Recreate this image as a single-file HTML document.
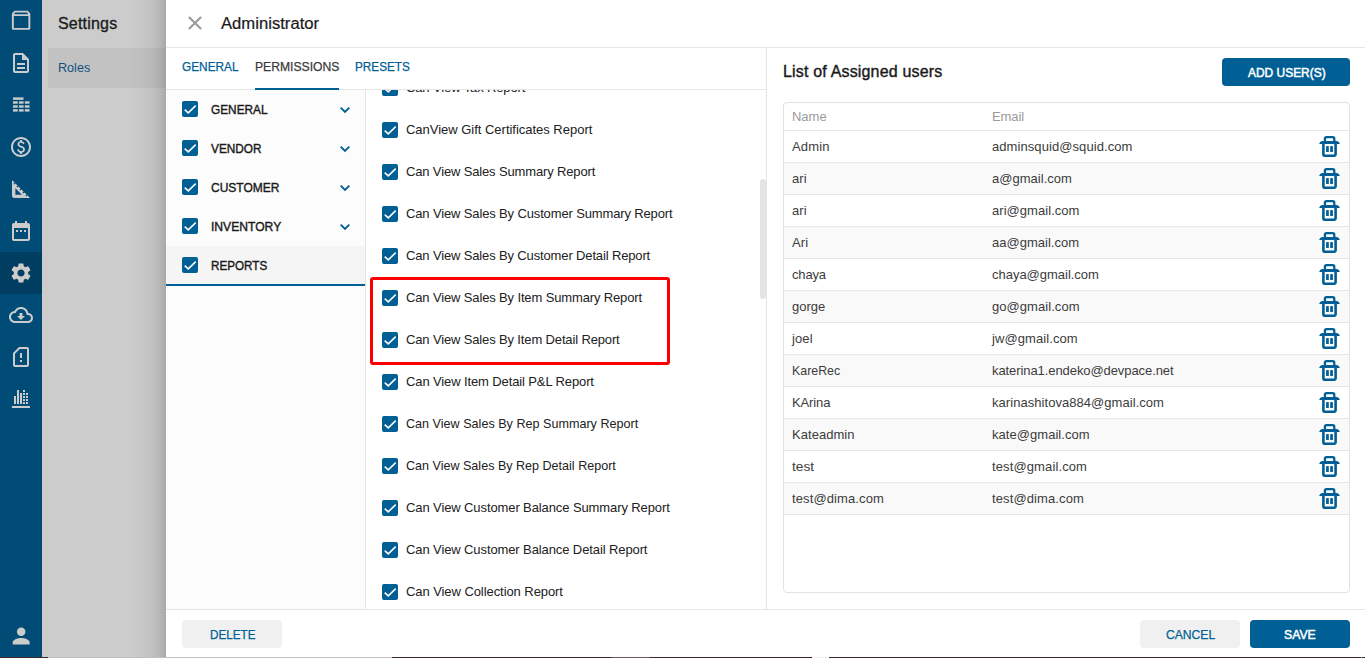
<!DOCTYPE html><html><head><meta charset="utf-8"><title>Administrator</title><style>

*{box-sizing:border-box;margin:0;padding:0}
html,body{width:1365px;height:658px;overflow:hidden;background:#fff}
body{font-family:"Liberation Sans", sans-serif;position:relative;color:#212121}
.tx{white-space:nowrap;position:absolute;display:block;line-height:1}
.abs{position:absolute}
#side{left:0;top:0;width:42px;height:658px;background:#004c77}
#side .act{position:absolute;left:0;top:252px;width:42px;height:42px;background:#003d60}
#side svg{position:absolute}
#ov{left:42px;top:0;width:124px;height:658px;background:#cccccc}
#shadow{left:128px;top:0;width:38px;height:658px;background:linear-gradient(to right,rgba(0,0,0,0) 0%,rgba(0,0,0,0.015) 31.6%,rgba(0,0,0,0.044) 57.9%,rgba(0,0,0,0.088) 76.3%,rgba(0,0,0,0.127) 89.5%,rgba(0,0,0,0.175) 100%)}
#roles{left:48px;top:48px;width:118px;height:40px;background:#c2c2c2;border-radius:3px 0 0 3px}
#panel{left:166px;top:0;width:1199px;height:658px;background:#fff}
.hline{position:absolute;height:1px;background:#e6e6e6}
.vline{position:absolute;width:1px;background:#e4e4e4}
.cb{position:absolute;width:16px;height:16px}
.chev{position:absolute;width:12px;height:8px}
.trash{position:absolute;width:21px;height:23px}
.btn{position:absolute;border-radius:4px;height:28px}

</style></head><body>
<div id="side" class="abs"><div class="act"></div>
<svg style="left:0;top:0" width="42" height="658" viewBox="0 0 42 658" fill="#cccccc">
<path fill-rule="evenodd" d="M14.4 10.7 H27.8 L30.3 13.4 V28.2 a1.6 1.6 0 0 1 -1.6 1.6 H13.5 a1.6 1.6 0 0 1 -1.6 -1.6 V13.4 Z M15.2 12.4 L14 14.3 H28.2 L27 12.4 Z M13.8 16.1 V28 H28.4 V16.1 Z"/>
<path transform="translate(21 63) scale(1) translate(-12 -12)" d="M8 16h8v2H8zm0-4h8v2H8zm6-10H6c-1.1 0-2 .9-2 2v16c0 1.1.89 2 1.99 2H18c1.1 0 2-.9 2-2V8l-6-6zm4 18H6V4h7v5h5v11z"/>
<path d="M22 55 V60 H27 Z" opacity="0.85"/>
<rect x="13" y="97.4" width="10.5" height="2.4"/>
<rect x="13" y="101.3" width="4.7" height="2.4"/>
<rect x="18.9" y="101.3" width="4.7" height="2.4"/>
<rect x="24.8" y="101.3" width="4.7" height="2.4"/>
<rect x="13" y="105.3" width="4.7" height="2.4"/>
<rect x="18.9" y="105.3" width="4.7" height="2.4"/>
<rect x="24.8" y="105.3" width="4.7" height="2.4"/>
<rect x="13" y="109.2" width="4.7" height="2.4"/>
<rect x="18.9" y="109.2" width="4.7" height="2.4"/>
<rect x="24.8" y="109.2" width="4.7" height="2.4"/>
<path transform="translate(21 147) scale(1) translate(-12 -12)" d="M12 2C6.48 2 2 6.48 2 12s4.48 10 10 10 10-4.48 10-10S17.52 2 12 2zm0 18c-4.41 0-8-3.59-8-8s3.59-8 8-8 8 3.59 8 8-3.59 8-8 8zm.89-8.9c-1.78-.59-2.64-.96-2.64-1.9 0-1.02 1.11-1.39 1.81-1.39 1.31 0 1.79.99 1.9 1.34l1.58-.67c-.15-.45-.82-1.92-2.54-2.24V5h-2v1.26c-2.48.56-2.49 2.86-2.49 2.96 0 2.27 2.25 2.91 3.35 3.31 1.58.56 2.28 1.07 2.28 2.03 0 1.13-1.05 1.61-1.98 1.61-1.82 0-2.34-1.87-2.4-2.09l-1.66.67c.63 2.19 2.28 2.78 2.9 2.96V19h2v-1.24c.4-.09 2.9-.59 2.9-3.22 0-1.39-.61-2.610-3.010-3.440z"/>
<path transform="translate(21 189) scale(1.125) translate(-12 -12)" d="M17.66 17.66l-1.06 1.06-.71-.71 1.06-1.06-1.94-1.94-1.06 1.06-.71-.71 1.06-1.06-1.94-1.94-1.06 1.06-.71-.71 1.06-1.06L9.7 9.7l-1.06 1.06-.71-.71 1.06-1.06-1.94-1.94-1.06 1.06-.71-.71 1.06-1.06L4 4v14c0 1.1.9 2 2 2h14l-2.340-2.340zM7 17v-5.760L12.760 17H7z"/>
<path transform="translate(21 231) scale(1) translate(-12 -12)" d="M9 11H7v2h2v-2zm4 0h-2v2h2v-2zm4 0h-2v2h2v-2zm2-7h-1V2h-2v2H8V2H6v2H5c-1.11 0-1.99.9-1.99 2L3 20c0 1.1.89 2 2 2h14c1.1 0 2-.9 2-2V6c0-1.1-.9-2-2-2zm0 16H5V9h14v11z"/>
<path transform="translate(21 273) scale(1) translate(-12 -12)" d="M19.14 12.94c.04-.3.06-.61.06-.94 0-.32-.02-.64-.07-.94l2.03-1.58c.18-.14.23-.41.12-.61l-1.92-3.32c-.12-.22-.37-.29-.59-.22l-2.39.96c-.5-.38-1.030-.7-1.620-.94l-.36-2.540c-.040-.240-.240-.410-.480-.410h-3.840c-.240 0-.430.170-.470.410l-.360 2.540c-.590.240-1.130.570-1.620.940l-2.390-.960c-.220-.080-.470 0-.590.220L2.740 8.870c-.120.210-.080.470.120.610l2.030 1.580c-.050.300-.090.630-.090.940s.020.640.070.940l-2.030 1.580c-.180.140-.230.410-.120.610l1.920 3.320c.120.220.370.290.590.220l2.390-.960c.500.380 1.030.700 1.620.940l.360 2.540c.050.240.240.410.480.410h3.840c.240 0 .440-.170.470-.410l.360-2.540c.590-.240 1.130-.560 1.620-.940l2.390.960c.220.080.470 0 .590-.220l1.920-3.320c.120-.220.070-.470-.120-.610l-2.010-1.580zM12 15.600c-1.980 0-3.600-1.620-3.600-3.600s1.620-3.600 3.600-3.600 3.600 1.620 3.600 3.600-1.620 3.600-3.600 3.600z"/>
<path transform="translate(21 315) scale(1) translate(-12 -12)" d="M19.35 10.04C18.67 6.59 15.64 4 12 4 9.11 4 6.6 5.64 5.35 8.04 2.34 8.36 0 10.91 0 14c0 3.31 2.69 6 6 6h13c2.76 0 5-2.24 5-5 0-2.64-2.05-4.78-4.65-4.960zM19 18H6c-2.210 0-4-1.790-4-4 0-2.050 1.530-3.760 3.560-3.970l1.070-.110.500-.950C8.080 7.140 9.940 6 12 6c2.620 0 4.880 1.860 5.390 4.430l.300 1.500 1.530.110c1.560.100 2.780 1.410 2.780 2.960 0 1.650-1.350 3-3 3zm-5.550-8h-2.900v3H8l4 4 4-4h-2.550z"/>
<path transform="translate(21 357) scale(1) translate(-12 -12)" d="M18 2h-8L4 8v12c0 1.100.9 2 2 2h12c1.100 0 2-.9 2-2V4c0-1.100-.9-2-2-2zm0 18H6V8.830L10.830 4H18v16zm-7-5h2v2h-2zm0-7h2v5h-2z"/>
<rect x="11.900" y="406" width="18.100" height="2"/>
<rect x="14" y="396" width="2" height="8"/><rect x="17" y="390" width="2" height="14"/><rect x="20" y="393" width="2" height="11"/>
<rect x="23" y="390" width="2" height="2"/>
<rect x="23" y="393" width="2" height="2"/>
<rect x="23" y="396" width="2" height="2"/>
<rect x="23" y="399" width="2" height="2"/>
<rect x="23" y="402" width="2" height="2"/>
<rect x="26" y="393" width="2" height="2"/>
<rect x="26" y="396" width="2" height="2"/>
<rect x="26" y="399" width="2" height="2"/>
<rect x="26" y="402" width="2" height="2"/>
<path transform="translate(21.2 636) scale(1.06) translate(-12 -12)" d="M12 12c2.210 0 4-1.790 4-4s-1.790-4-4-4-4 1.790-4 4 1.790 4 4 4zm0 2c-2.670 0-8 1.340-8 4v2h16v-2c0-2.660-5.330-4-8-4z"/>
</svg></div>
<div id="ov" class="abs"></div><div id="roles" class="abs"></div><div id="shadow" class="abs"></div>
<span id="t1" class="tx" style="left:58px;top:16.46px;font-size:16px;color:#1a1a1a;-webkit-text-stroke:0.3px #1a1a1a;letter-spacing:0.199px">Settings</span>
<span id="t2" class="tx" style="left:58px;top:61.00px;font-size:13px;color:#15507f;transform-origin:0 0;transform:scaleX(0.9685)">Roles</span>
<div id="panel" class="abs"></div>
<svg class="abs" style="left:187px;top:15px" width="16" height="16" viewBox="0 0 16 16"><path d="M1.900 1.900 L14.100 14.100 M14.100 1.900 L1.900 14.100" stroke="#999999" stroke-width="2.100"/></svg>
<span id="t3" class="tx" style="left:220.5px;top:16.46px;font-size:16px;color:#1a1a1a;-webkit-text-stroke:0.2px #1a1a1a;transform-origin:0 0;transform:scaleX(1.0405)">Administrator</span>
<div class="hline" style="left:166px;top:47px;width:1199px"></div>
<span id="t4" class="tx" style="left:182px;top:60.20px;font-size:13px;color:#005f95;-webkit-text-stroke:0.25px #005f95;transform-origin:0 0;transform:scaleX(0.9107)">GENERAL</span>
<span id="t5" class="tx" style="left:255px;top:60.20px;font-size:13px;color:#3a3a3a;-webkit-text-stroke:0.25px #3a3a3a;transform-origin:0 0;transform:scaleX(0.9342)">PERMISSIONS</span>
<span id="t6" class="tx" style="left:355px;top:60.20px;font-size:13px;color:#005f95;-webkit-text-stroke:0.25px #005f95;transform-origin:0 0;transform:scaleX(0.9040)">PRESETS</span>
<div class="hline" style="left:166px;top:89px;width:600px"></div>
<div class="abs" style="left:255px;top:88px;width:84px;height:2px;background:#005f95"></div>
<div class="abs" style="left:166px;top:90px;width:199px;height:519px;background:#fcfcfc"></div>
<div class="abs" style="left:166px;top:246px;width:199px;height:38px;background:#f5f5f5"></div>
<div class="abs" style="left:166px;top:284px;width:199px;height:2px;background:#005f95"></div>
<div class="vline" style="left:365px;top:90px;height:519px"></div>
<svg class="cb" style="left:182px;top:101px" viewBox="0 0 16 16"><rect x="0" y="0" width="16" height="16" rx="2" fill="#005f95"/><path d="M2.700 8.600 L6.250 11.850 L13.700 4.600" fill="none" stroke="#fff" stroke-width="1.550"/></svg>
<span id="t7" class="tx" style="left:211px;top:102.80px;font-size:13px;color:#1a1a1a;-webkit-text-stroke:0.4px #1a1a1a;transform-origin:0 0;transform:scaleX(0.9107)">GENERAL</span>
<svg class="chev" style="left:339px;top:106px" viewBox="-1 -1 12 8"><path d="M0.700 0.700 L5 5 L9.300 0.700" fill="none" stroke="#005f95" stroke-width="1.900"/></svg>
<svg class="cb" style="left:182px;top:140px" viewBox="0 0 16 16"><rect x="0" y="0" width="16" height="16" rx="2" fill="#005f95"/><path d="M2.700 8.600 L6.250 11.850 L13.700 4.600" fill="none" stroke="#fff" stroke-width="1.550"/></svg>
<span id="t8" class="tx" style="left:211px;top:141.80px;font-size:13px;color:#1a1a1a;-webkit-text-stroke:0.4px #1a1a1a;transform-origin:0 0;transform:scaleX(0.9096)">VENDOR</span>
<svg class="chev" style="left:339px;top:145px" viewBox="-1 -1 12 8"><path d="M0.700 0.700 L5 5 L9.300 0.700" fill="none" stroke="#005f95" stroke-width="1.900"/></svg>
<svg class="cb" style="left:182px;top:179px" viewBox="0 0 16 16"><rect x="0" y="0" width="16" height="16" rx="2" fill="#005f95"/><path d="M2.700 8.600 L6.250 11.850 L13.700 4.600" fill="none" stroke="#fff" stroke-width="1.550"/></svg>
<span id="t9" class="tx" style="left:211px;top:180.80px;font-size:13px;color:#1a1a1a;-webkit-text-stroke:0.4px #1a1a1a;transform-origin:0 0;transform:scaleX(0.9233)">CUSTOMER</span>
<svg class="chev" style="left:339px;top:184px" viewBox="-1 -1 12 8"><path d="M0.700 0.700 L5 5 L9.300 0.700" fill="none" stroke="#005f95" stroke-width="1.900"/></svg>
<svg class="cb" style="left:182px;top:218px" viewBox="0 0 16 16"><rect x="0" y="0" width="16" height="16" rx="2" fill="#005f95"/><path d="M2.700 8.600 L6.250 11.850 L13.700 4.600" fill="none" stroke="#fff" stroke-width="1.550"/></svg>
<span id="t10" class="tx" style="left:211px;top:219.80px;font-size:13px;color:#1a1a1a;-webkit-text-stroke:0.4px #1a1a1a;transform-origin:0 0;transform:scaleX(0.9314)">INVENTORY</span>
<svg class="chev" style="left:339px;top:223px" viewBox="-1 -1 12 8"><path d="M0.700 0.700 L5 5 L9.300 0.700" fill="none" stroke="#005f95" stroke-width="1.900"/></svg>
<svg class="cb" style="left:182px;top:257px" viewBox="0 0 16 16"><rect x="0" y="0" width="16" height="16" rx="2" fill="#005f95"/><path d="M2.700 8.600 L6.250 11.850 L13.700 4.600" fill="none" stroke="#fff" stroke-width="1.550"/></svg>
<span id="t11" class="tx" style="left:211px;top:258.80px;font-size:13px;color:#1a1a1a;-webkit-text-stroke:0.4px #1a1a1a;transform-origin:0 0;transform:scaleX(0.8979)">REPORTS</span>
<div class="abs" style="left:366px;top:90px;width:400px;height:519px;overflow:hidden">
<svg class="cb" style="left:16px;top:-10px" viewBox="0 0 16 16"><rect x="0" y="0" width="16" height="16" rx="2" fill="#005f95"/><path d="M2.700 8.600 L6.250 11.850 L13.700 4.600" fill="none" stroke="#fff" stroke-width="1.550"/></svg>
<span id="t12" class="tx" style="left:40px;top:-9.00px;font-size:13px;color:#212121;letter-spacing:-0.125px">Can View Tax Report</span>
<svg class="cb" style="left:16px;top:32px" viewBox="0 0 16 16"><rect x="0" y="0" width="16" height="16" rx="2" fill="#005f95"/><path d="M2.700 8.600 L6.250 11.850 L13.700 4.600" fill="none" stroke="#fff" stroke-width="1.550"/></svg>
<span id="t13" class="tx" style="left:40px;top:33.00px;font-size:13px;color:#212121;letter-spacing:-0.019px">CanView Gift Certificates Report</span>
<svg class="cb" style="left:16px;top:74px" viewBox="0 0 16 16"><rect x="0" y="0" width="16" height="16" rx="2" fill="#005f95"/><path d="M2.700 8.600 L6.250 11.850 L13.700 4.600" fill="none" stroke="#fff" stroke-width="1.550"/></svg>
<span id="t14" class="tx" style="left:40px;top:75.00px;font-size:13px;color:#212121;letter-spacing:-0.147px">Can View Sales Summary Report</span>
<svg class="cb" style="left:16px;top:116px" viewBox="0 0 16 16"><rect x="0" y="0" width="16" height="16" rx="2" fill="#005f95"/><path d="M2.700 8.600 L6.250 11.850 L13.700 4.600" fill="none" stroke="#fff" stroke-width="1.550"/></svg>
<span id="t15" class="tx" style="left:40px;top:117.00px;font-size:13px;color:#212121;letter-spacing:-0.139px">Can View Sales By Customer Summary Report</span>
<svg class="cb" style="left:16px;top:158px" viewBox="0 0 16 16"><rect x="0" y="0" width="16" height="16" rx="2" fill="#005f95"/><path d="M2.700 8.600 L6.250 11.850 L13.700 4.600" fill="none" stroke="#fff" stroke-width="1.550"/></svg>
<span id="t16" class="tx" style="left:40px;top:159.00px;font-size:13px;color:#212121;letter-spacing:-0.142px">Can View Sales By Customer Detail Report</span>
<svg class="cb" style="left:16px;top:200px" viewBox="0 0 16 16"><rect x="0" y="0" width="16" height="16" rx="2" fill="#005f95"/><path d="M2.700 8.600 L6.250 11.850 L13.700 4.600" fill="none" stroke="#fff" stroke-width="1.550"/></svg>
<span id="t17" class="tx" style="left:40px;top:201.00px;font-size:13px;color:#212121;letter-spacing:-0.139px">Can View Sales By Item Summary Report</span>
<svg class="cb" style="left:16px;top:242px" viewBox="0 0 16 16"><rect x="0" y="0" width="16" height="16" rx="2" fill="#005f95"/><path d="M2.700 8.600 L6.250 11.850 L13.700 4.600" fill="none" stroke="#fff" stroke-width="1.550"/></svg>
<span id="t18" class="tx" style="left:40px;top:243.00px;font-size:13px;color:#212121;letter-spacing:-0.142px">Can View Sales By Item Detail Report</span>
<svg class="cb" style="left:16px;top:284px" viewBox="0 0 16 16"><rect x="0" y="0" width="16" height="16" rx="2" fill="#005f95"/><path d="M2.700 8.600 L6.250 11.850 L13.700 4.600" fill="none" stroke="#fff" stroke-width="1.550"/></svg>
<span id="t19" class="tx" style="left:40px;top:285.00px;font-size:13px;color:#212121;letter-spacing:-0.117px">Can View Item Detail P&amp;L Report</span>
<svg class="cb" style="left:16px;top:326px" viewBox="0 0 16 16"><rect x="0" y="0" width="16" height="16" rx="2" fill="#005f95"/><path d="M2.700 8.600 L6.250 11.850 L13.700 4.600" fill="none" stroke="#fff" stroke-width="1.550"/></svg>
<span id="t20" class="tx" style="left:40px;top:327.00px;font-size:13px;color:#212121;transform-origin:0 0;transform:scaleX(0.9690)">Can View Sales By Rep Summary Report</span>
<svg class="cb" style="left:16px;top:368px" viewBox="0 0 16 16"><rect x="0" y="0" width="16" height="16" rx="2" fill="#005f95"/><path d="M2.700 8.600 L6.250 11.850 L13.700 4.600" fill="none" stroke="#fff" stroke-width="1.550"/></svg>
<span id="t21" class="tx" style="left:40px;top:369.00px;font-size:13px;color:#212121;transform-origin:0 0;transform:scaleX(0.9658)">Can View Sales By Rep Detail Report</span>
<svg class="cb" style="left:16px;top:410px" viewBox="0 0 16 16"><rect x="0" y="0" width="16" height="16" rx="2" fill="#005f95"/><path d="M2.700 8.600 L6.250 11.850 L13.700 4.600" fill="none" stroke="#fff" stroke-width="1.550"/></svg>
<span id="t22" class="tx" style="left:40px;top:411.00px;font-size:13px;color:#212121;letter-spacing:-0.103px">Can View Customer Balance Summary Report</span>
<svg class="cb" style="left:16px;top:452px" viewBox="0 0 16 16"><rect x="0" y="0" width="16" height="16" rx="2" fill="#005f95"/><path d="M2.700 8.600 L6.250 11.850 L13.700 4.600" fill="none" stroke="#fff" stroke-width="1.550"/></svg>
<span id="t23" class="tx" style="left:40px;top:453.00px;font-size:13px;color:#212121;letter-spacing:-0.104px">Can View Customer Balance Detail Report</span>
<svg class="cb" style="left:16px;top:494px" viewBox="0 0 16 16"><rect x="0" y="0" width="16" height="16" rx="2" fill="#005f95"/><path d="M2.700 8.600 L6.250 11.850 L13.700 4.600" fill="none" stroke="#fff" stroke-width="1.550"/></svg>
<span id="t24" class="tx" style="left:40px;top:495.00px;font-size:13px;color:#212121;letter-spacing:-0.070px">Can View Collection Report</span>
</div>
<div class="abs" style="left:370px;top:277px;width:300px;height:88px;border:3px solid #ff0000;border-radius:3px"></div>
<div class="abs" style="left:760px;top:179px;width:6px;height:120px;background:#e4e4e4;border-radius:3px"></div>
<div class="vline" style="left:766px;top:48px;height:561px"></div>
<span id="t25" class="tx" style="left:783px;top:63.86px;font-size:16px;color:#1a1a1a;-webkit-text-stroke:0.4px #1a1a1a;letter-spacing:0.172px">List of Assigned users</span>
<div class="btn" style="left:1222px;top:58px;width:128px;background:#005f95"></div>
<span id="t26" class="tx" style="left:1248px;top:65.50px;font-size:13px;color:#fff;-webkit-text-stroke:0.5px #fff;transform-origin:0 0;transform:scaleX(0.9188)">ADD USER(S)</span>
<div class="abs" style="left:783px;top:102px;width:567px;height:491px;border:1px solid #e2e2e2;border-radius:4px"></div>
<span id="t27" class="tx" style="left:792px;top:110.00px;font-size:13px;color:#9a9a9a;letter-spacing:-0.016px">Name</span>
<span id="t28" class="tx" style="left:992px;top:110.00px;font-size:13px;color:#9a9a9a;letter-spacing:-0.082px">Email</span>
<div class="hline" style="left:784px;top:130px;width:565px"></div>
<span id="t29" class="tx" style="left:792px;top:140.00px;font-size:13px;color:#3c3c3c;letter-spacing:0.176px">Admin</span>
<span id="t30" class="tx" style="left:992px;top:140.00px;font-size:13px;color:#3c3c3c;letter-spacing:0.076px">adminsquid@squid.com</span>
<svg class="trash" style="left:1319px;top:135px" viewBox="0 0 21 23"><path d="M5.95 6.500 V3.550 a1.500 1.500 0 0 1 1.500 -1.500 H13.750 a1.500 1.500 0 0 1 1.500 1.500 V6.500" fill="none" stroke="#005f95" stroke-width="2.300"/><path d="M0.200 8.900 Q0.900 5.900 3.600 5.900 H17.400 Q20.100 5.900 20.800 8.900 Z" fill="#005f95"/><path d="M4.400 8 V19.300 a1.500 1.500 0 0 0 1.500 1.500 H15.100 a1.500 1.500 0 0 0 1.500 -1.500 V8" fill="none" stroke="#005f95" stroke-width="2.600"/><rect x="7.100" y="11.100" width="2.700" height="5.900" fill="#005f95"/><rect x="11.200" y="11.100" width="2.700" height="5.900" fill="#005f95"/></svg>
<div class="abs" style="left:784px;top:162px;width:565px;height:32px;background:#f9f9f9"></div>
<div class="hline" style="left:784px;top:162px;width:565px"></div>
<span id="t31" class="tx" style="left:792px;top:172.00px;font-size:13px;color:#3c3c3c;letter-spacing:0.094px">ari</span>
<span id="t32" class="tx" style="left:992px;top:172.00px;font-size:13px;color:#3c3c3c;letter-spacing:0.022px">a@gmail.com</span>
<svg class="trash" style="left:1319px;top:167px" viewBox="0 0 21 23"><path d="M5.95 6.500 V3.550 a1.500 1.500 0 0 1 1.500 -1.500 H13.750 a1.500 1.500 0 0 1 1.500 1.500 V6.500" fill="none" stroke="#005f95" stroke-width="2.300"/><path d="M0.200 8.900 Q0.900 5.900 3.600 5.900 H17.400 Q20.100 5.900 20.800 8.900 Z" fill="#005f95"/><path d="M4.400 8 V19.300 a1.500 1.500 0 0 0 1.500 1.500 H15.100 a1.500 1.500 0 0 0 1.500 -1.500 V8" fill="none" stroke="#005f95" stroke-width="2.600"/><rect x="7.100" y="11.100" width="2.700" height="5.900" fill="#005f95"/><rect x="11.200" y="11.100" width="2.700" height="5.900" fill="#005f95"/></svg>
<div class="hline" style="left:784px;top:194px;width:565px"></div>
<span id="t33" class="tx" style="left:792px;top:204.00px;font-size:13px;color:#3c3c3c;letter-spacing:0.094px">ari</span>
<span id="t34" class="tx" style="left:992px;top:204.00px;font-size:13px;color:#3c3c3c;letter-spacing:0.047px">ari@gmail.com</span>
<svg class="trash" style="left:1319px;top:199px" viewBox="0 0 21 23"><path d="M5.95 6.500 V3.550 a1.500 1.500 0 0 1 1.500 -1.500 H13.750 a1.500 1.500 0 0 1 1.500 1.500 V6.500" fill="none" stroke="#005f95" stroke-width="2.300"/><path d="M0.200 8.900 Q0.900 5.900 3.600 5.900 H17.400 Q20.100 5.900 20.800 8.900 Z" fill="#005f95"/><path d="M4.400 8 V19.300 a1.500 1.500 0 0 0 1.500 1.500 H15.100 a1.500 1.500 0 0 0 1.500 -1.500 V8" fill="none" stroke="#005f95" stroke-width="2.600"/><rect x="7.100" y="11.100" width="2.700" height="5.900" fill="#005f95"/><rect x="11.200" y="11.100" width="2.700" height="5.900" fill="#005f95"/></svg>
<div class="abs" style="left:784px;top:226px;width:565px;height:32px;background:#f9f9f9"></div>
<div class="hline" style="left:784px;top:226px;width:565px"></div>
<span id="t35" class="tx" style="left:792px;top:236.00px;font-size:13px;color:#3c3c3c;letter-spacing:0.078px">Ari</span>
<span id="t36" class="tx" style="left:992px;top:236.00px;font-size:13px;color:#3c3c3c;letter-spacing:0.006px">aa@gmail.com</span>
<svg class="trash" style="left:1319px;top:231px" viewBox="0 0 21 23"><path d="M5.95 6.500 V3.550 a1.500 1.500 0 0 1 1.500 -1.500 H13.750 a1.500 1.500 0 0 1 1.500 1.500 V6.500" fill="none" stroke="#005f95" stroke-width="2.300"/><path d="M0.200 8.900 Q0.900 5.900 3.600 5.900 H17.400 Q20.100 5.900 20.800 8.900 Z" fill="#005f95"/><path d="M4.400 8 V19.300 a1.500 1.500 0 0 0 1.500 1.500 H15.100 a1.500 1.500 0 0 0 1.500 -1.500 V8" fill="none" stroke="#005f95" stroke-width="2.600"/><rect x="7.100" y="11.100" width="2.700" height="5.900" fill="#005f95"/><rect x="11.200" y="11.100" width="2.700" height="5.900" fill="#005f95"/></svg>
<div class="hline" style="left:784px;top:258px;width:565px"></div>
<span id="t37" class="tx" style="left:792px;top:268.00px;font-size:13px;color:#3c3c3c;letter-spacing:-0.156px">chaya</span>
<span id="t38" class="tx" style="left:992px;top:268.00px;font-size:13px;color:#3c3c3c;letter-spacing:-0.017px">chaya@gmail.com</span>
<svg class="trash" style="left:1319px;top:263px" viewBox="0 0 21 23"><path d="M5.95 6.500 V3.550 a1.500 1.500 0 0 1 1.500 -1.500 H13.750 a1.500 1.500 0 0 1 1.500 1.500 V6.500" fill="none" stroke="#005f95" stroke-width="2.300"/><path d="M0.200 8.900 Q0.900 5.900 3.600 5.900 H17.400 Q20.100 5.900 20.800 8.900 Z" fill="#005f95"/><path d="M4.400 8 V19.300 a1.500 1.500 0 0 0 1.500 1.500 H15.100 a1.500 1.500 0 0 0 1.500 -1.500 V8" fill="none" stroke="#005f95" stroke-width="2.600"/><rect x="7.100" y="11.100" width="2.700" height="5.900" fill="#005f95"/><rect x="11.200" y="11.100" width="2.700" height="5.900" fill="#005f95"/></svg>
<div class="abs" style="left:784px;top:290px;width:565px;height:32px;background:#f9f9f9"></div>
<div class="hline" style="left:784px;top:290px;width:565px"></div>
<span id="t39" class="tx" style="left:792px;top:300.00px;font-size:13px;color:#3c3c3c;letter-spacing:-0.012px">gorge</span>
<span id="t40" class="tx" style="left:992px;top:300.00px;font-size:13px;color:#3c3c3c;letter-spacing:0.057px">go@gmail.com</span>
<svg class="trash" style="left:1319px;top:295px" viewBox="0 0 21 23"><path d="M5.95 6.500 V3.550 a1.500 1.500 0 0 1 1.500 -1.500 H13.750 a1.500 1.500 0 0 1 1.500 1.500 V6.500" fill="none" stroke="#005f95" stroke-width="2.300"/><path d="M0.200 8.900 Q0.900 5.900 3.600 5.900 H17.400 Q20.100 5.900 20.800 8.900 Z" fill="#005f95"/><path d="M4.400 8 V19.300 a1.500 1.500 0 0 0 1.500 1.500 H15.100 a1.500 1.500 0 0 0 1.500 -1.500 V8" fill="none" stroke="#005f95" stroke-width="2.600"/><rect x="7.100" y="11.100" width="2.700" height="5.900" fill="#005f95"/><rect x="11.200" y="11.100" width="2.700" height="5.900" fill="#005f95"/></svg>
<div class="hline" style="left:784px;top:322px;width:565px"></div>
<span id="t41" class="tx" style="left:792px;top:332.00px;font-size:13px;color:#3c3c3c;letter-spacing:0.115px">joel</span>
<span id="t42" class="tx" style="left:992px;top:332.00px;font-size:13px;color:#3c3c3c;letter-spacing:0.089px">jw@gmail.com</span>
<svg class="trash" style="left:1319px;top:327px" viewBox="0 0 21 23"><path d="M5.95 6.500 V3.550 a1.500 1.500 0 0 1 1.500 -1.500 H13.750 a1.500 1.500 0 0 1 1.500 1.500 V6.500" fill="none" stroke="#005f95" stroke-width="2.300"/><path d="M0.200 8.900 Q0.900 5.900 3.600 5.900 H17.400 Q20.100 5.900 20.800 8.900 Z" fill="#005f95"/><path d="M4.400 8 V19.300 a1.500 1.500 0 0 0 1.500 1.500 H15.100 a1.500 1.500 0 0 0 1.500 -1.500 V8" fill="none" stroke="#005f95" stroke-width="2.600"/><rect x="7.100" y="11.100" width="2.700" height="5.900" fill="#005f95"/><rect x="11.200" y="11.100" width="2.700" height="5.900" fill="#005f95"/></svg>
<div class="abs" style="left:784px;top:354px;width:565px;height:32px;background:#f9f9f9"></div>
<div class="hline" style="left:784px;top:354px;width:565px"></div>
<span id="t43" class="tx" style="left:792px;top:364.00px;font-size:13px;color:#3c3c3c;transform-origin:0 0;transform:scaleX(0.9515)">KareRec</span>
<span id="t44" class="tx" style="left:992px;top:364.00px;font-size:13px;color:#3c3c3c;letter-spacing:-0.081px">katerina1.endeko@devpace.net</span>
<svg class="trash" style="left:1319px;top:359px" viewBox="0 0 21 23"><path d="M5.95 6.500 V3.550 a1.500 1.500 0 0 1 1.500 -1.500 H13.750 a1.500 1.500 0 0 1 1.500 1.500 V6.500" fill="none" stroke="#005f95" stroke-width="2.300"/><path d="M0.200 8.900 Q0.900 5.900 3.600 5.900 H17.400 Q20.100 5.900 20.800 8.900 Z" fill="#005f95"/><path d="M4.400 8 V19.300 a1.500 1.500 0 0 0 1.500 1.500 H15.100 a1.500 1.500 0 0 0 1.500 -1.500 V8" fill="none" stroke="#005f95" stroke-width="2.600"/><rect x="7.100" y="11.100" width="2.700" height="5.900" fill="#005f95"/><rect x="11.200" y="11.100" width="2.700" height="5.900" fill="#005f95"/></svg>
<div class="hline" style="left:784px;top:386px;width:565px"></div>
<span id="t45" class="tx" style="left:792px;top:396.00px;font-size:13px;color:#3c3c3c;letter-spacing:-0.113px">KArina</span>
<span id="t46" class="tx" style="left:992px;top:396.00px;font-size:13px;color:#3c3c3c;letter-spacing:0.049px">karinashitova884@gmail.com</span>
<svg class="trash" style="left:1319px;top:391px" viewBox="0 0 21 23"><path d="M5.95 6.500 V3.550 a1.500 1.500 0 0 1 1.500 -1.500 H13.750 a1.500 1.500 0 0 1 1.500 1.500 V6.500" fill="none" stroke="#005f95" stroke-width="2.300"/><path d="M0.200 8.900 Q0.900 5.900 3.600 5.900 H17.400 Q20.100 5.900 20.800 8.900 Z" fill="#005f95"/><path d="M4.400 8 V19.300 a1.500 1.500 0 0 0 1.500 1.500 H15.100 a1.500 1.500 0 0 0 1.500 -1.500 V8" fill="none" stroke="#005f95" stroke-width="2.600"/><rect x="7.100" y="11.100" width="2.700" height="5.900" fill="#005f95"/><rect x="11.200" y="11.100" width="2.700" height="5.900" fill="#005f95"/></svg>
<div class="abs" style="left:784px;top:418px;width:565px;height:32px;background:#f9f9f9"></div>
<div class="hline" style="left:784px;top:418px;width:565px"></div>
<span id="t47" class="tx" style="left:792px;top:428.00px;font-size:13px;color:#3c3c3c;letter-spacing:0.047px">Kateadmin</span>
<span id="t48" class="tx" style="left:992px;top:428.00px;font-size:13px;color:#3c3c3c;letter-spacing:0.047px">kate@gmail.com</span>
<svg class="trash" style="left:1319px;top:423px" viewBox="0 0 21 23"><path d="M5.95 6.500 V3.550 a1.500 1.500 0 0 1 1.500 -1.500 H13.750 a1.500 1.500 0 0 1 1.500 1.500 V6.500" fill="none" stroke="#005f95" stroke-width="2.300"/><path d="M0.200 8.900 Q0.900 5.900 3.600 5.900 H17.400 Q20.100 5.900 20.800 8.900 Z" fill="#005f95"/><path d="M4.400 8 V19.300 a1.500 1.500 0 0 0 1.500 1.500 H15.100 a1.500 1.500 0 0 0 1.500 -1.500 V8" fill="none" stroke="#005f95" stroke-width="2.600"/><rect x="7.100" y="11.100" width="2.700" height="5.900" fill="#005f95"/><rect x="11.200" y="11.100" width="2.700" height="5.900" fill="#005f95"/></svg>
<div class="hline" style="left:784px;top:450px;width:565px"></div>
<span id="t49" class="tx" style="left:792px;top:460.00px;font-size:13px;color:#3c3c3c;transform-origin:0 0;transform:scaleX(1.0544)">test</span>
<span id="t50" class="tx" style="left:992px;top:460.00px;font-size:13px;color:#3c3c3c;letter-spacing:0.119px">test@gmail.com</span>
<svg class="trash" style="left:1319px;top:455px" viewBox="0 0 21 23"><path d="M5.95 6.500 V3.550 a1.500 1.500 0 0 1 1.500 -1.500 H13.750 a1.500 1.500 0 0 1 1.500 1.500 V6.500" fill="none" stroke="#005f95" stroke-width="2.300"/><path d="M0.200 8.900 Q0.900 5.900 3.600 5.900 H17.400 Q20.100 5.900 20.800 8.900 Z" fill="#005f95"/><path d="M4.400 8 V19.300 a1.500 1.500 0 0 0 1.500 1.500 H15.100 a1.500 1.500 0 0 0 1.500 -1.500 V8" fill="none" stroke="#005f95" stroke-width="2.600"/><rect x="7.100" y="11.100" width="2.700" height="5.900" fill="#005f95"/><rect x="11.200" y="11.100" width="2.700" height="5.900" fill="#005f95"/></svg>
<div class="abs" style="left:784px;top:482px;width:565px;height:32px;background:#f9f9f9"></div>
<div class="hline" style="left:784px;top:482px;width:565px"></div>
<span id="t51" class="tx" style="left:792px;top:492.00px;font-size:13px;color:#3c3c3c;letter-spacing:0.108px">test@dima.com</span>
<span id="t52" class="tx" style="left:992px;top:492.00px;font-size:13px;color:#3c3c3c;letter-spacing:0.108px">test@dima.com</span>
<svg class="trash" style="left:1319px;top:487px" viewBox="0 0 21 23"><path d="M5.95 6.500 V3.550 a1.500 1.500 0 0 1 1.500 -1.500 H13.750 a1.500 1.500 0 0 1 1.500 1.500 V6.500" fill="none" stroke="#005f95" stroke-width="2.300"/><path d="M0.200 8.900 Q0.900 5.900 3.600 5.900 H17.400 Q20.100 5.900 20.800 8.900 Z" fill="#005f95"/><path d="M4.400 8 V19.300 a1.500 1.500 0 0 0 1.500 1.500 H15.100 a1.500 1.500 0 0 0 1.500 -1.500 V8" fill="none" stroke="#005f95" stroke-width="2.600"/><rect x="7.100" y="11.100" width="2.700" height="5.900" fill="#005f95"/><rect x="11.200" y="11.100" width="2.700" height="5.900" fill="#005f95"/></svg>
<div class="hline" style="left:784px;top:514px;width:565px"></div>
<div class="hline" style="left:166px;top:609px;width:1199px"></div>
<div class="btn" style="left:182px;top:620px;width:100px;background:#f0f0f0"></div>
<span id="t53" class="tx" style="left:209.5px;top:628.00px;font-size:13px;color:#005f95;-webkit-text-stroke:0.25px #005f95;transform-origin:0 0;transform:scaleX(0.9015)">DELETE</span>
<div class="btn" style="left:1140px;top:620px;width:100px;background:#f0f0f0"></div>
<span id="t54" class="tx" style="left:1166px;top:628.00px;font-size:13px;color:#005f95;-webkit-text-stroke:0.25px #005f95;transform-origin:0 0;transform:scaleX(0.9325)">CANCEL</span>
<div class="btn" style="left:1250px;top:620px;width:100px;background:#005f95"></div>
<span id="t55" class="tx" style="left:1284px;top:628.00px;font-size:13px;color:#fff;-webkit-text-stroke:0.5px #fff;transform-origin:0 0;transform:scaleX(0.9402)">SAVE</span>
<div class="abs" style="left:0px;top:657px;width:48px;height:1px;background:#3e2a28"></div>
<div class="abs" style="left:48px;top:657px;width:344px;height:1px;background:#bfbfbf"></div>
<div class="abs" style="left:392px;top:657px;width:219px;height:1px;background:#3a2424"></div>
<div class="abs" style="left:611px;top:657px;width:39px;height:1px;background:#6d5c5b"></div>
<div class="abs" style="left:650px;top:657px;width:162px;height:1px;background:#3a2424"></div>
<div class="abs" style="left:813px;top:657px;width:15px;height:1px;background:#eeeeee"></div>
<div class="abs" style="left:829px;top:657px;width:532px;height:1px;background:#3a2424"></div>
<div class="abs" style="left:1361px;top:657px;width:1px;height:1px;background:#9a8c8c"></div>
<div class="abs" style="left:1362px;top:657px;width:3px;height:1px;background:#3a2424"></div>
</body></html>
